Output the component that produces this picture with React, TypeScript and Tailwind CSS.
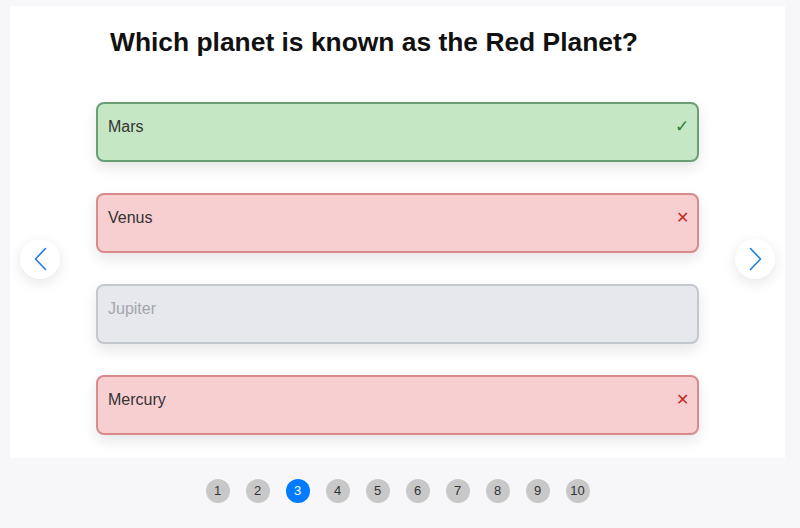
type Option = {
  label: string;
  state: "correct" | "wrong" | "disabled";
};

const options: Option[] = [
  { label: "Mars", state: "correct" },
  { label: "Venus", state: "wrong" },
  { label: "Jupiter", state: "disabled" },
  { label: "Mercury", state: "wrong" },
];

const styles = {
  correct: "border-2 border-[#6b9e76] bg-[#c5e7c3] text-[#333]",
  wrong: "border-2 border-[#d98a8c] bg-[#f7cfd0] text-[#333]",
  disabled: "border-2 border-[#c3c8cf] bg-[#e6e8eb] text-[#a3a7ad]",
};

function OptionRow({ option }: { option: Option }) {
  return (
    <div
      className={`flex h-[60px] items-start justify-between rounded-lg pl-[10px] pr-[8px] pt-[11px] shadow-[0_6px_14px_rgba(0,0,0,0.1)] ${styles[option.state]}`}
    >
      <span className="text-base leading-6">{option.label}</span>
      {option.state === "correct" ? (
        <span className="text-[17px] leading-6 text-[#2e7d32]">✓</span>
      ) : null}
      {option.state === "wrong" ? (
        <span className="text-base leading-6 text-[#c62828]">✕</span>
      ) : null}
    </div>
  );
}

function Chevron({ dir }: { dir: "left" | "right" }) {
  return (
    <svg width="13" height="24" viewBox="0 0 13 24" fill="none">
      <polyline
        points={dir === "left" ? "11.5,1.5 1.5,12 11.5,22.5" : "1.5,1.5 11.5,12 1.5,22.5"}
        stroke="#1e7be6"
        strokeWidth="1.6"
        strokeLinecap="round"
        strokeLinejoin="round"
      />
    </svg>
  );
}

export default function App() {
  const pages = [1, 2, 3, 4, 5, 6, 7, 8, 9, 10];

  return (
    <div className="h-[528px] w-[800px] overflow-hidden bg-[#f7f7f9] pl-[10px] pr-[15px] pt-[6px] font-['Liberation_Sans',Arial,sans-serif]">
      <div className="relative h-[452px] bg-white">
        <h1 className="pl-[100px] pt-[20px] text-[26.4px] font-bold leading-8 text-[#111]">
          Which planet is known as the Red Planet?
        </h1>

        <div className="mx-[86px] mt-[44px] flex flex-col gap-[31px]">
          {options.map((option) => (
            <OptionRow key={option.label} option={option} />
          ))}
        </div>

        <button className="absolute left-[10px] top-[233px] flex h-10 w-10 items-center justify-center rounded-full bg-white shadow-[0_4px_14px_rgba(0,0,0,0.1)]">
          <Chevron dir="left" />
        </button>
        <button className="absolute right-[10px] top-[233px] flex h-10 w-10 items-center justify-center rounded-full bg-white shadow-[0_4px_14px_rgba(0,0,0,0.1)]">
          <Chevron dir="right" />
        </button>
      </div>

      <div className="mt-[21px] flex justify-center gap-4">
        {pages.map((page) => (
          <span
            key={page}
            className={`flex h-6 w-6 items-center justify-center rounded-full text-[13px] ${
              page === 3 ? "bg-[#007bff] text-white" : "bg-[#c8c8c8] text-[#333]"
            }`}
          >
            {page}
          </span>
        ))}
      </div>
    </div>
  );
}
